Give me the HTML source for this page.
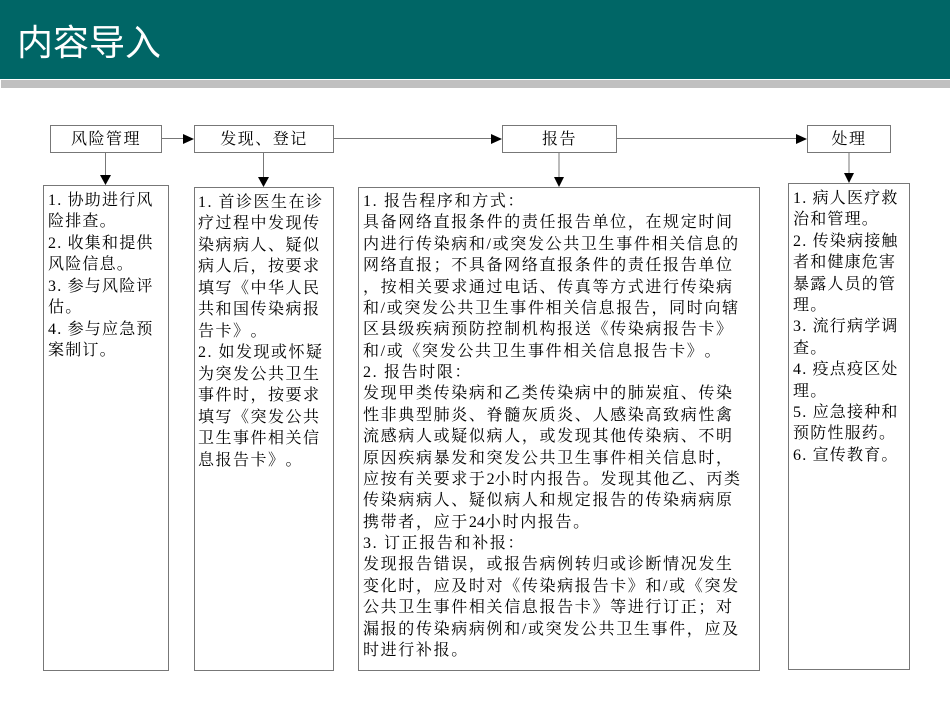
<!DOCTYPE html>
<html lang="zh">
<head>
<meta charset="utf-8">
<title>内容导入</title>
<style>
html,body{margin:0;padding:0;background:#fff}
#p{position:relative;width:950px;height:713px;overflow:hidden;background:#fff;color:#000;text-spacing-trim:space-all;font-kerning:none}
#h{position:absolute;left:0;top:0;width:950px;height:79px;background:#006666}
#b{position:absolute;left:1px;top:80px;width:949px;height:8px;background:#c0c0c0}
#t{position:absolute;left:17px;top:17px;font:400 36px/52px "Liberation Sans","Noto Sans CJK SC",sans-serif;color:#fff;white-space:nowrap}
.x{position:absolute;box-sizing:border-box;border:1px solid #777;background:#fff}
.l{position:absolute;text-align:center;font:400 16px/27px "Liberation Serif","Noto Serif CJK SC",serif;letter-spacing:1.5px;white-space:nowrap}
.c{position:absolute;font:400 16px/21.43px "Liberation Serif","Noto Serif CJK SC",serif;white-space:nowrap}
.n{letter-spacing:0}
svg{position:absolute;left:0;top:0}
</style>
</head>
<body>
<div id="p">
<div id="h"></div><div id="b"></div>
<div id="t">内容导入</div>

<svg width="950" height="713">
<g stroke="#777" stroke-width="1" fill="none">
<path d="M161.500 138.500H184M333 138.500H492M616 138.500H797M105.500 152V176M263.500 152V178M559 152V178M849 152V174"/>
</g>
<g fill="#000">
<path d="M183 134L194 139L183 144Z"/>
<path d="M491 134L502 139L491 144Z"/>
<path d="M796 134L807 139L796 144Z"/>
<path d="M100 175H111L105.500 185Z"/>
<path d="M258 177H269L263.500 187Z"/>
<path d="M554 177H564L559 187Z"/>
<path d="M844 173H854L849 183Z"/>
</g>
</svg>

<div class="x" style="left:50px;top:125px;width:112px;height:28px"></div>
<div class="l" style="left:50px;top:126px;width:112px">风险管理</div>
<div class="x" style="left:194px;top:125px;width:140px;height:28px"></div>
<div class="l" style="left:194px;top:126px;width:140px">发现、登记</div>
<div class="x" style="left:502px;top:125px;width:115px;height:28px"></div>
<div class="l" style="left:502px;top:126px;width:115px">报告</div>
<div class="x" style="left:807px;top:125px;width:84px;height:28px"></div>
<div class="l" style="left:807px;top:126px;width:84px">处理</div>

<div class="x" style="left:43px;top:185px;width:126px;height:486px"></div>
<div class="c" style="left:48px;top:190px;letter-spacing:1.2px">1. 协助进行风<br>险排查。<br>2. 收集和提供<br>风险信息。<br>3. 参与风险评<br>估。<br>4. 参与应急预<br>案制订。</div>

<div class="x" style="left:194px;top:187px;width:140px;height:484px"></div>
<div class="c" style="left:198px;top:191.500px;line-height:21.500px;letter-spacing:1.5px">1. 首诊医生在诊<br>疗过程中发现传<br>染病病人、疑似<br>病人后，按要求<br>填写《中华人民<br>共和国传染病报<br>告卡》。<br>2. 如发现或怀疑<br>为突发公共卫生<br>事件时，按要求<br>填写《突发公共<br>卫生事件相关信<br>息报告卡》。</div>

<div class="x" style="left:358px;top:187px;width:402px;height:484px"></div>
<div class="c" style="left:363px;top:191px;line-height:21.380px;letter-spacing:1.65px">1. 报告程序和方式：<br>具备网络直报条件的责任报告单位，在规定时间<br>内进行传染病和/或突发公共卫生事件相关信息的<br>网络直报；不具备网络直报条件的责任报告单位<br>，按相关要求通过电话、传真等方式进行传染病<br>和/或突发公共卫生事件相关信息报告，同时向辖<br>区县级疾病预防控制机构报送《传染病报告卡》<br>和/或《突发公共卫生事件相关信息报告卡》。<br>2. 报告时限：<br>发现甲类传染病和乙类传染病中的肺炭疽、传染<br>性非典型肺炎、脊髓灰质炎、人感染高致病性禽<br>流感病人或疑似病人，或发现其他传染病、不明<br>原因疾病暴发和突发公共卫生事件相关信息时，<br>应按有关要求于<span class="n">2</span>小时内报告。发现其他乙、丙类<br>传染病病人、疑似病人和规定报告的传染病病原<br>携带者，应于<span class="n">24</span>小时内报告。<br>3. 订正报告和补报：<br>发现报告错误，或报告病例转归或诊断情况发生<br>变化时，应及时对《传染病报告卡》和/或《突发<br>公共卫生事件相关信息报告卡》等进行订正；对<br>漏报的传染病病例和/或突发公共卫生事件，应及<br>时进行补报。</div>

<div class="x" style="left:788px;top:183px;width:122px;height:487px"></div>
<div class="c" style="left:793px;top:188px;line-height:21.400px;letter-spacing:1.2px">1. 病人医疗救<br>治和管理。<br>2. 传染病接触<br>者和健康危害<br>暴露人员的管<br>理。<br>3. 流行病学调<br>查。<br>4. 疫点疫区处<br>理。<br>5. 应急接种和<br>预防性服药。<br>6. 宣传教育。</div>
</div>
</body>
</html>
